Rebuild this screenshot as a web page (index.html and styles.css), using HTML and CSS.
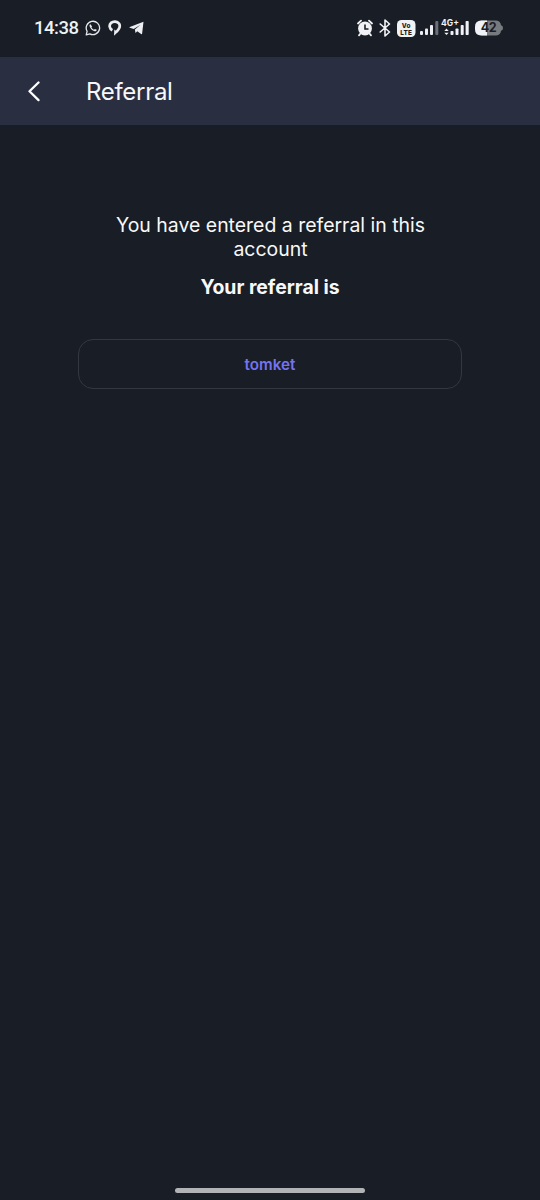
FILE: index.html
```html
<!DOCTYPE html>
<html lang="en">
<head>
<meta charset="utf-8">
<title>Referral</title>
<link rel="stylesheet" href="styles.css">
</head>
<body>
<div class="screen">
  <div class="status">
    <div class="status-left">
      <span class="time">14:38</span>
      <svg class="chat" width="16" height="16" viewBox="0 0 16 16" fill="none">
        <path d="M1.2 14.8 2.1 11.3A6.7 6.7 0 1 1 4.8 13.9Z" stroke="#e6e8ec" stroke-width="1.3" stroke-linejoin="round"/>
        <path d="M5.5 4.2c-.8.3-1.2 1.1-.9 2.1.8 2.7 2.6 4.4 5 5 1 .2 2-.4 2.1-1.5L9.9 8.9l-.9.9C7.800 9.200 7 8.400 6.400 7.200l.7-.8Z" fill="#e6e8ec"/>
      </svg>
      <svg class="pin" width="14" height="16" viewBox="0 0 14 16" fill="none">
        <path d="M4.400 10.300C1.300 8.600.8 5 3 2.900 5.400.9 9.200 1.100 11 3.500 12.800 6.200 11.300 9.200 7.700 12.300" stroke="#eceef2" stroke-width="2.700"/>
        <path d="M6.300 9.500 9.600 12.200 6 15.700Z" fill="#eceef2"/>
      </svg>
      <svg class="plane" width="15" height="14" viewBox="0 0 15 14">
        <path d="M14.500.8 13.100 12.700Q12.900 13.500 12.100 13L8.300 10.300 6.500 12.100 5.900 8.500 11.500 3.800 4.700 7.900.8 6.700Q-.1 6.300.8 5.900Z" fill="#eceef2"/>
      </svg>
    </div>
    <div class="status-right">
      <svg width="16" height="18" viewBox="0 0 16 18">
        <path d="M1 4.500 4 1.700M15 4.500 12 1.700M3.500 14.500 2 16.300M12.500 14.500 14 16.300" stroke="#f0f2f5" stroke-width="1.800" stroke-linecap="round"/>
        <circle cx="8" cy="9.500" r="6.900" fill="#f0f2f5"/>
        <path d="M8 5.500V10h3.500" fill="none" stroke="#1a1d26" stroke-width="1.600"/>
      </svg>
      <svg class="bluetooth" width="12" height="18" viewBox="0 0 12 18" fill="none">
        <path d="M1.200 5 10.500 13 6 17V1L10.500 5 1.200 13" stroke="#f0f2f5" stroke-width="1.600" stroke-linejoin="round" stroke-linecap="round"/>
      </svg>
      <svg class="volte" width="19" height="17" viewBox="0 0 19 17">
        <rect width="18.500" height="17" rx="4.500" fill="#f0f2f5"/>
        <text x="9.200" y="7.500" text-anchor="middle" class="tiny">Vo</text>
        <text x="9.200" y="15.300" text-anchor="middle" class="tiny">LTE</text>
      </svg>
      <svg class="signal" width="19" height="16" viewBox="0 0 19 16" fill="#eceef2">
        <rect x="0" y="11" width="3" height="4" rx="1"/><rect x="5" y="8.500" width="3" height="6.500" rx="1"/><rect x="10" y="5" width="3" height="10" rx="1"/><rect x="15.300" y="1" width="3" height="14" rx="1" fill="#6b6f77"/>
      </svg>
      <svg class="network" width="28" height="20" viewBox="0 0 28 20" fill="#f0f2f5">
        <text x="0" y="7.500" class="network-label">4G+</text>
        <path d="M3.300 12.900 5.500 10.600 7.700 12.900ZM3.300 14.700H7.700L5.500 17Z"/>
        <rect x="9.500" y="13" width="3" height="4" rx=".8"/><rect x="14.500" y="10.500" width="3" height="6.500" rx=".8"/><rect x="19.700" y="7" width="3" height="10" rx=".8"/><rect x="24.600" y="3" width="3.100" height="14" rx=".8"/>
      </svg>
      <svg class="battery" width="29" height="16" viewBox="0 0 29 16">
        <path d="M6.500.5H20.500Q25.500.5 26 5.200 28 5.500 28 8T26 10.800Q25.500 15.500 20.500 15.500H6.500Q0 15.500 0 9V7Q0 .5 6.500 .5Z" fill="#777a7f"/>
        <path d="M6.500.5H12V15.500H6.500Q0 15.500 0 9V7Q0 .5 6.500 .5Z" fill="#f0f2f5"/>
        <text x="13.500" y="12.400" text-anchor="middle" class="battery-label">42</text>
      </svg>
    </div>
  </div>
  <header class="header">
    <svg width="14" height="22" viewBox="0 0 14 22" fill="none"><path d="M12.500 2.500 3.500 11.300 12.500 20.100" stroke="#fff" stroke-width="2.300" stroke-linecap="round" stroke-linejoin="round"/></svg>
    <h1 class="title">Referral</h1>
  </header>
  <main class="content">
    <p class="message">You have entered a referral in this account</p>
    <p class="label">Your referral is</p>
    <div class="code">tomket</div>
  </main>
  <div class="home-bar"></div>
</div>
</body>
</html>
```
FILE: styles.css
```css
* { box-sizing: border-box; }
body { margin: 0; background: #191d25; color: #f7f8fa; font-family: Inter, sans-serif; }
.screen { display: flex; flex-direction: column; height: 1200px; }
.status { display: flex; justify-content: space-between; height: 57px; padding: 0 36px 1px 34px; }
.status-left, .status-right { display: flex; align-items: center; }
.time { width: 44px; font: 500 18.5px/24px Roboto, sans-serif; letter-spacing: -0.5px; color: #f0f2f5; white-space: nowrap; }
.chat { margin-left: 7px; }
.pin { margin-left: 7px; }
.plane { margin-left: 7px; }
.bluetooth { margin-left: 6px; }
.volte { margin-left: 6px; }
.signal { margin-left: 4px; }
.network { margin-left: 2px; }
.battery { margin-left: 6px; }
.tiny { font: 800 6.4px Inter, sans-serif; letter-spacing: 0.2px; fill: #1a1d26; }
.network-label { font: 700 8.5px Inter, sans-serif; }
.battery-label { font: 700 12.5px Inter, sans-serif; letter-spacing: -0.5px; fill: #1a1d26; }
.header { display: flex; align-items: center; height: 68px; padding-left: 26px; background: #2a2e41; }
.title { margin: 2px 0 0 46px; font-size: 24px; font-weight: 400; line-height: 30px; letter-spacing: -0.3px; }
.content { flex: 1; display: flex; flex-direction: column; align-items: center; padding: 88px 78px 0; text-align: center; }
.message { width: 340px; margin: 0; padding-left: 1px; font-size: 19.45px; line-height: 24px; }
.label { margin: 14px 0 0; font-size: 19.4px; font-weight: 700; line-height: 24px; }
.code { width: 384px; height: 50px; margin-top: 40px; border: 1px solid #343740; border-radius: 15px; color: #7474f0; font-size: 15.2px; font-weight: 600; line-height: 50px; }
.home-bar { width: 190px; height: 5px; margin: 0 auto 7px; border-radius: 3px; background: #b1b3b6; }
```
